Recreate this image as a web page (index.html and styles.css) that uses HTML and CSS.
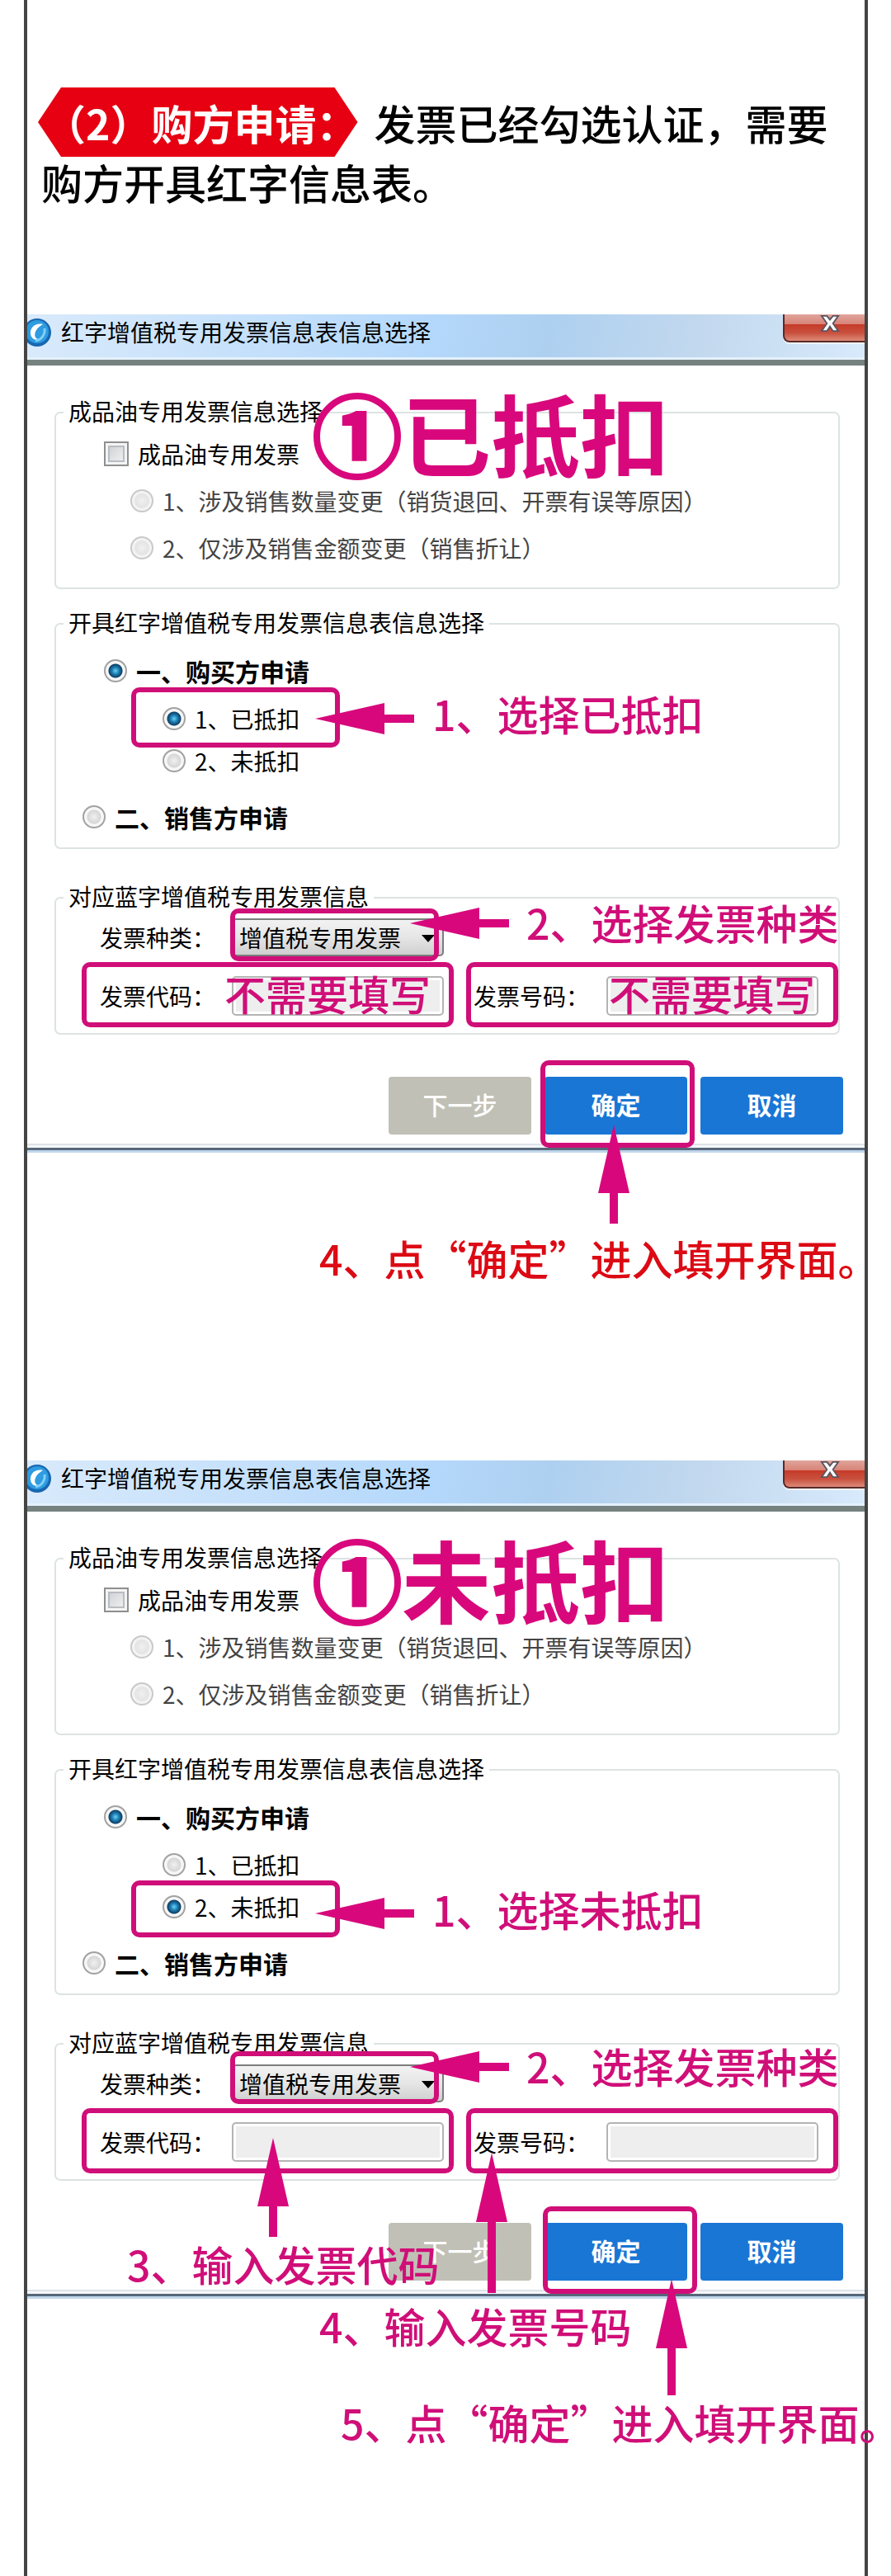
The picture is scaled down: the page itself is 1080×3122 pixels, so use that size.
FILE: index.html
```html
<!DOCTYPE html>
<html lang="zh-CN">
<head>
  <meta charset="UTF-8" />
  <meta name="viewport" content="width=device-width, initial-scale=1" />
  <title>购方申请</title>
  <link rel="stylesheet" href="styles.css">
</head>
<body>
  <!-- shared arrow shapes -->
  <svg class="defs" width="0" height="0">
    <symbol id="arrow-left" viewBox="0 0 120 38"><path d="M0 19 84 0V14H120V24H84V38Z" /></symbol>
  </svg>

  <main class="page">
    <h1 class="intro"><span class="badge">（2）购方申请：</span>发票已经勾选认证，需要<br>购方开具红字信息表。</h1>

    <!-- 已抵扣 -->
    <section class="step">
      <form class="dialog">
        <header class="titlebar">
          <svg class="logo" viewBox="0 0 34 34">
            <circle cx="17" cy="17" r="17" fill="#1767b0" />
            <circle cx="17" cy="16" r="14" fill="#2f9be0" />
            <path d="M24 7C15 5 8 11 9 19c1 5 5 8 9 6-6-2-5-12 6-18Z" fill="#fff" />
            <path d="M26 12c1 8-4 14-11 15" fill="none" stroke="#7fd0f7" stroke-width="3" />
          </svg>
          <h2>红字增值税专用发票信息表信息选择</h2>
          <button type="button" class="close" aria-label="关闭">
            <svg viewBox="0 0 26 24"><path d="M2 2H9L13 7 17 2H24L17 12 24 22H17L13 16 9 22H2L9 12Z" /></svg>
          </button>
        </header>
        <div class="content">
          <fieldset class="group oil">
            <legend>成品油专用发票信息选择</legend>
            <label class="option"><input type="checkbox"> 成品油专用发票</label>
            <label class="option sub"><input type="radio" name="oil1" disabled> 1、涉及销售数量变更（销货退回、开票有误等原因）</label>
            <label class="option sub"><input type="radio" name="oil1" disabled> 2、仅涉及销售金额变更（销售折让）</label>
          </fieldset>
          <fieldset class="group apply">
            <legend>开具红字增值税专用发票信息表信息选择</legend>
            <label class="option strong"><input type="radio" name="side1" checked> 一、购买方申请</label>
            <div class="choices">
              <label class="option"><input type="radio" name="deduct1" checked> 1、已抵扣</label>
              <label class="option"><input type="radio" name="deduct1"> 2、未抵扣</label>
            </div>
            <label class="option strong seller"><input type="radio" name="side1"> 二、销售方申请</label>
          </fieldset>
          <fieldset class="group invoice">
            <legend>对应蓝字增值税专用发票信息</legend>
            <div class="fields">
              <label for="kind1">发票种类：</label>
              <div class="select"><select id="kind1"><option>增值税专用发票</option></select></div>
              <label for="code1" class="code">发票代码：</label>
              <input type="text" id="code1">
              <label for="number1">发票号码：</label>
              <input type="text" id="number1">
            </div>
          </fieldset>
          <div class="buttons">
            <button type="button" disabled>下一步</button>
            <button type="button">确定</button>
            <button type="button">取消</button>
          </div>
        </div>
      </form>

      <div class="mark mark-choice"></div>
      <div class="mark mark-kind"></div>
      <div class="mark mark-code"></div>
      <div class="mark mark-number"></div>
      <div class="mark mark-ok"></div>
      <svg class="arrow arrow-choice"><use href="#arrow-left" /></svg>
      <svg class="arrow arrow-kind"><use href="#arrow-left" /></svg>
      <svg class="arrow arrow-ok" viewBox="0 0 38 120"><path d="M19 0 38 83H24V120H14V83H0Z" /></svg>
      <p class="note big"><span class="circled">①</span>已抵扣</p>
      <p class="note note-choice">1、选择已抵扣</p>
      <p class="note note-kind">2、选择发票种类</p>
      <p class="note note-code">不需要填写</p>
      <p class="note note-number">不需要填写</p>
      <p class="note note-ok red">4、点“确定”进入填开界面。</p>
    </section>

    <!-- 未抵扣 -->
    <section class="step unpaid">
      <form class="dialog">
        <header class="titlebar">
          <svg class="logo" viewBox="0 0 34 34">
            <circle cx="17" cy="17" r="17" fill="#1767b0" />
            <circle cx="17" cy="16" r="14" fill="#2f9be0" />
            <path d="M24 7C15 5 8 11 9 19c1 5 5 8 9 6-6-2-5-12 6-18Z" fill="#fff" />
            <path d="M26 12c1 8-4 14-11 15" fill="none" stroke="#7fd0f7" stroke-width="3" />
          </svg>
          <h2>红字增值税专用发票信息表信息选择</h2>
          <button type="button" class="close" aria-label="关闭">
            <svg viewBox="0 0 26 24"><path d="M2 2H9L13 7 17 2H24L17 12 24 22H17L13 16 9 22H2L9 12Z" /></svg>
          </button>
        </header>
        <div class="content">
          <fieldset class="group oil">
            <legend>成品油专用发票信息选择</legend>
            <label class="option"><input type="checkbox"> 成品油专用发票</label>
            <label class="option sub"><input type="radio" name="oil2" disabled> 1、涉及销售数量变更（销货退回、开票有误等原因）</label>
            <label class="option sub"><input type="radio" name="oil2" disabled> 2、仅涉及销售金额变更（销售折让）</label>
          </fieldset>
          <fieldset class="group apply">
            <legend>开具红字增值税专用发票信息表信息选择</legend>
            <label class="option strong"><input type="radio" name="side2" checked> 一、购买方申请</label>
            <div class="choices">
              <label class="option"><input type="radio" name="deduct2"> 1、已抵扣</label>
              <label class="option"><input type="radio" name="deduct2" checked> 2、未抵扣</label>
            </div>
            <label class="option strong seller"><input type="radio" name="side2"> 二、销售方申请</label>
          </fieldset>
          <fieldset class="group invoice">
            <legend>对应蓝字增值税专用发票信息</legend>
            <div class="fields">
              <label for="kind2">发票种类：</label>
              <div class="select"><select id="kind2"><option>增值税专用发票</option></select></div>
              <label for="code2" class="code">发票代码：</label>
              <input type="text" id="code2">
              <label for="number2">发票号码：</label>
              <input type="text" id="number2">
            </div>
          </fieldset>
          <div class="buttons">
            <button type="button" disabled>下一步</button>
            <button type="button">确定</button>
            <button type="button">取消</button>
          </div>
        </div>
      </form>

      <div class="mark mark-choice"></div>
      <div class="mark mark-kind"></div>
      <div class="mark mark-code"></div>
      <div class="mark mark-number"></div>
      <div class="mark mark-ok"></div>
      <svg class="arrow arrow-choice"><use href="#arrow-left" /></svg>
      <svg class="arrow arrow-kind"><use href="#arrow-left" /></svg>
      <svg class="arrow arrow-code" viewBox="0 0 38 120"><path d="M19 0 38 83H24V120H14V83H0Z" /></svg>
      <svg class="arrow arrow-number" viewBox="0 0 38 170"><path d="M19 0 38 84H24V170H14V84H0Z" /></svg>
      <svg class="arrow arrow-ok" viewBox="0 0 38 141"><path d="M19 0 38 84H24V141H14V84H0Z" /></svg>
      <p class="note big"><span class="circled">①</span>未抵扣</p>
      <p class="note note-choice">1、选择未抵扣</p>
      <p class="note note-kind">2、选择发票种类</p>
      <p class="note note-code">3、输入发票代码</p>
      <p class="note note-number">4、输入发票号码</p>
      <p class="note note-ok">5、点“确定”进入填开界面。</p>
    </section>
  </main>
</body>
</html>
```

FILE: styles.css
```css
* { box-sizing: border-box; }
body {
  margin: 0;
  background: #fff;
  color: #000;
  font-family: "Noto Sans CJK SC", sans-serif;
  overflow-x: hidden;
}
.defs {
  position: absolute;
}
.page {
  min-height: 100vh;
  margin: 0 28px 0 29px;
  padding-top: 112px;
  border: solid #444;
  border-width: 0 4px;
}

/* heading */
.intro {
  margin: 0 0 125px;
  padding-left: 17px;
  font-size: 50px;
  font-weight: 500;
  line-height: 70px;
}
.badge {
  display: inline-block;
  margin: -7px 20px -7px -4px;
  padding-left: 8px;
  background: #e60012;
  color: #fff;
  font-weight: bold;
  line-height: 84px;
  clip-path: polygon(0 50%, 28px 0, calc(100% - 28px) 0, 100% 50%, calc(100% - 28px) 100%, 28px 100%);
}
.intro {
  line-height: 72px;
}

/* dialog */
.step {
  position: relative;
  margin-bottom: 373px;
}
.dialog {
  font-size: 28px;
  line-height: 30px;
}
.dialog::after {
  content: "";
  display: block;
  height: 11px;
  background: linear-gradient(#dfe3e8 2px, #f4f6f8 2px 5px, #56677a 5px 8px, #bfd6ea 8px);
}
.titlebar {
  display: flex;
  align-items: flex-start;
  height: 62px;
  overflow: hidden;
  border-bottom: 7px solid #75827f;
  background: linear-gradient(100deg, #d9eafb 0%, #c3dffb 30%, #b4d8fb 48%, #aed0f0 62%, #c2d8ee 80%, #d8eafc 100%);
  box-shadow: inset 0 -3px #e4f1fc;
}
.logo {
  width: 34px;
  height: 34px;
  margin: 5px 12px 0 -5px;
}
.titlebar h2 {
  flex: 1;
  margin: 6px 0 0;
  font-size: 28px;
  font-weight: 400;
  line-height: 30px;
}
.close {
  width: 99px;
  height: 34px;
  padding: 0 0 10px 12px;
  border: solid #5b2a2a;
  border-width: 0 0 2px 2px;
  border-radius: 0 0 0 8px;
  background: linear-gradient(#e0a59c 0%, #d88478 36%, #c63a28 38%, #c9503e 70%, #dc8b78 100%);
  box-shadow: 0 2px 0 #eef6fd;
}
.close svg {
  display: block;
  width: 26px;
  height: 22px;
  margin: auto;
  fill: #fff;
  stroke: #5b5560;
  stroke-width: 2;
}
.content {
  padding: 41px 30px 11px 33px;
}
.group {
  display: grid;
  margin: 0;
  padding: 0 0 0 9px;
  border: 2px solid #dde3e3;
  border-radius: 7px;
}
.group legend {
  padding: 0 6px 4px;
  line-height: 28px;
}
.oil {
  gap: 27px;
  padding-top: 19px;
  padding-bottom: 33px;
}
.apply {
  margin-top: 26px;
  padding-top: 26px;
  padding-bottom: 22px;
}
.invoice {
  margin-top: 43px;
  padding-top: 9px;
  padding-bottom: 21px;
}
.option {
  display: flex;
  align-items: center;
  gap: 11px;
  margin-left: 49px;
}
.sub {
  margin-left: 81px;
  color: #444;
}
.choices {
  display: grid;
  gap: 21px;
  margin: 28px 0 38px 71px;
}
.strong {
  font-size: 30px;
  font-weight: bold;
}
.seller {
  margin-left: 23px;
}
input[type="radio"] {
  appearance: none;
  width: 28px;
  height: 28px;
  margin: 0;
  border: 2px solid #a2a2a2;
  border-radius: 50%;
  background: radial-gradient(circle at 50% 50%, #f0f0f0 0, #d6d6d6 8px, #f7f7f7 9px);
}
input[type="radio"]:checked {
  background: radial-gradient(circle at 50% 50%, #6fd0f5 0, #1f83b8 4px, #0d3f66 8px, #f7f7f7 9px);
}
input[type="radio"]:disabled {
  border-color: #c9c9c9;
  background: radial-gradient(circle, #f0f0f0 0, #e4e4e4 8px, #f4f4f4 10px);
}
input[type="checkbox"] {
  appearance: none;
  width: 30px;
  height: 30px;
  margin: 0;
  border: 2px solid #8f8f8f;
  background: linear-gradient(135deg, #c8ccd0, #f6f6f6);
  box-shadow: inset 0 0 0 3px #f4f4f4, inset 0 0 0 5px #b9bdc2;
}
.fields {
  display: grid;
  grid-template-columns: 124px 257px 125px 257px;
  gap: 24px 36px;
  align-items: center;
  margin-left: 44px;
}
.fields label {
  white-space: nowrap;
}
.code {
  grid-column: 1;
}
.fields input, .select select {
  width: 100%;
  height: 48px;
  border: 2px solid #b4b4b4;
  border-radius: 5px;
  background: #eee;
  box-shadow: inset 0 0 0 3px #fff;
}
.select {
  position: relative;
}
.select select {
  display: block;
  appearance: none;
  height: 46px;
  padding: 0 0 0 7px;
  border-color: #7c7c7c;
  background: linear-gradient(#f2f2f2 0%, #e6e6e6 50%, #cfcfcf 100%);
  box-shadow: none;
  color: #000;
  font: inherit;
}
.select::after {
  content: "";
  position: absolute;
  top: 20px;
  right: 11px;
  border: 8px solid transparent;
  border-top: 9px solid #000;
  border-bottom: 0;
}
.buttons {
  display: flex;
  justify-content: flex-end;
  gap: 16px;
  margin: 51px -4px 0 0;
}
.buttons button {
  width: 173px;
  height: 70px;
  padding: 0 0 4px;
  border: 0;
  border-radius: 4px;
  background: #1976d5;
  color: #fff;
  font-family: inherit;
  font-size: 30px;
  font-weight: bold;
}
.buttons button:disabled {
  background: #c0c0b6;
  font-weight: 500;
}

/* annotations drawn over the dialog */
.mark, .arrow, .note {
  position: absolute;
}
.mark {
  border: 6px solid #d00e78;
  border-radius: 10px;
}
.arrow {
  width: 120px;
  height: 38px;
  fill: #d8087c;
}
.note {
  margin: 0;
  color: #d00e78;
  font-size: 50px;
  font-weight: 500;
  line-height: 46px;
  white-space: nowrap;
}
.big {
  top: 88px;
  left: 346px;
  color: #d8087c;
  font-size: 108px;
  font-weight: bold;
  line-height: 108px;
}
.circled { -webkit-text-stroke: 4px #d8087c; }
.red { color: #dc0a14; }
.mark-choice { top: 452px; left: 126px; width: 253px; height: 73px; }
.mark-kind { top: 720px; left: 246px; width: 253px; height: 64px; }
.mark-code { top: 785px; left: 66px; width: 451px; height: 79px; }
.mark-number { top: 785px; left: 532px; width: 451px; height: 79px; }
.mark-ok { top: 904px; left: 622px; width: 187px; height: 106px; }
.arrow-choice { top: 471px; left: 349px; }
.arrow-kind { top: 719px; left: 464px; }
.arrow-ok { top: 982px; left: 692px; width: 38px; height: 120px; }
.note-choice { top: 460px; left: 491px; }
.note-kind { top: 713px; left: 605px; }
.note-code { top: 799px; left: 239px; }
.note-number { top: 799px; left: 705px; }
.note-ok { top: 1120px; left: 354px; }

.unpaid .mark-choice { top: 509px; height: 69px; }
.unpaid .mark-kind { top: 716px; }
.unpaid .mark-ok { left: 625px; }
.unpaid .arrow-choice { top: 530px; }
.unpaid .arrow-kind { top: 716px; }
.unpaid .arrow-code { top: 821px; left: 279px; width: 38px; height: 120px; }
.unpaid .arrow-number { top: 839px; left: 544px; width: 38px; height: 170px; }
.unpaid .arrow-ok { top: 992px; left: 762px; height: 141px; }
.unpaid .note-choice { top: 520px; }
.unpaid .note-kind { top: 710px; }
.unpaid .note-code { top: 950px; left: 121px; }
.unpaid .note-number { top: 1025px; left: 354px; }
.unpaid .note-ok { top: 1142px; left: 380px; }
```
